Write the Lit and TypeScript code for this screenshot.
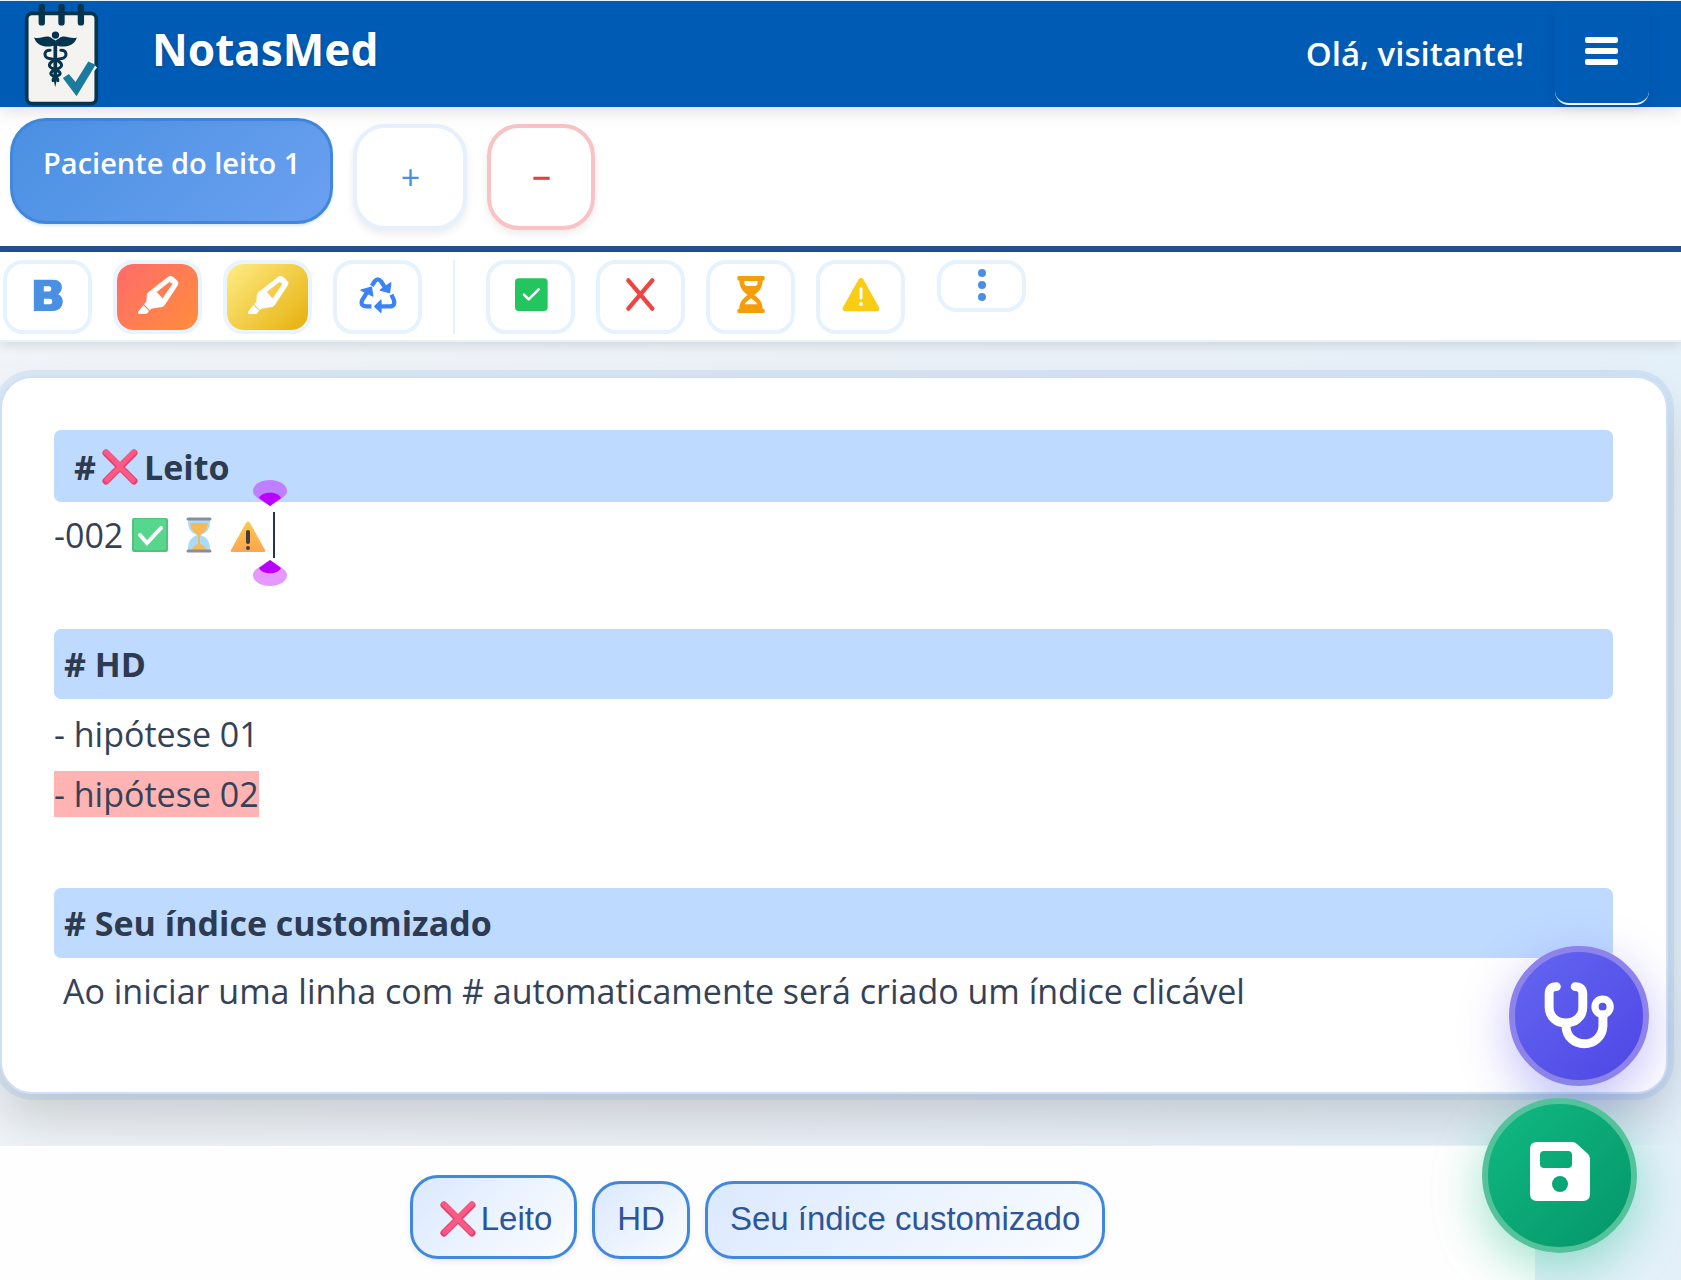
import { LitElement, html, svg, css } from "lit";
import { customElement, state } from "lit/decorators.js";

const logo = svg`
<svg class="logo" viewBox="72 8 224 308" role="img" aria-label="NotasMed">
  <rect x="80" y="39" width="208" height="270" rx="16" fill="#f5f3ef" stroke="#05344f" stroke-width="11"/>
  <g stroke="#05344f" stroke-width="19" stroke-linecap="round">
    <path d="M125 20V66M184 20V66M242 20V66"/>
  </g>
  <g fill="#05344f">
    <circle cx="166" cy="104" r="11"/>
    <path d="M102 111C122 118 140 100 156 114L166 120L176 114C192 100 210 118 230 111C224 130 208 140 180 138L171 136V234L165 260L160 234V136L151 138C124 140 108 130 102 111Z"/>
  </g>
  <g fill="none" stroke="#05344f" stroke-width="9" stroke-linecap="round">
    <path d="M150 149C130 148 130 172 147 174C166 176 186 184 184 196C182 208 152 206 152 219C152 228 176 228 173 240"/>
    <path d="M182 149C202 148 202 172 185 174C166 176 146 184 148 196C150 208 180 206 180 219C180 228 156 226 159 240"/>
  </g>
  <path d="M203 215L229 246L278 190" fill="none" stroke="#f5f3ef" stroke-width="34"/>
  <path d="M188 232L206 220L226 244L264 183L286 193L229 287Z" fill="#1a7b9e"/>
</svg>`;

const bold = svg`
<svg class="icon" viewBox="88 145 110 110" aria-hidden="true">
  <path fill="#4a90e2" fill-rule="evenodd" d="M102 156H158C190 156 188 190 172 198C194 206 190 246 158 246H102ZM131 175V190H146C155 190 155 175 146 175ZM131 211V227H148C158 227 158 211 148 211Z"/>
</svg>`;

const marker = svg`
<svg class="icon pen" viewBox="406 130 126 126" aria-hidden="true">
  <path fill="#fff" stroke="#fff" stroke-width="2" fill-rule="evenodd" d="M500 139C506 135 511 138 516 141L526 150C531 155 530 160 526 166L489 222C485 228 480 229 474 229L450 233L444 237L428 221L435 213L437 192C438 187 441 184 446 181ZM503 153L464 184L479 200L483 204L514 159Z"/>
  <path fill="#fff" d="M425 224L442 240L438 247C435 250 432 250 427 250H413C407 249 408 245 411 241Z"/>
</svg>`;

const recycle = svg`
<svg class="icon" viewBox="1074 134 116 116" aria-hidden="true">
  <g fill="none" stroke="#3b82f6" stroke-width="13" stroke-linejoin="round">
    <path d="M1113 164L1122 150Q1131 138 1141 150L1155 172"/>
    <path d="M1173 191L1180 206Q1186 226 1168 227H1136"/>
    <path d="M1112 227H1096Q1078 226 1083 209L1100 181"/>
  </g>
  <g fill="#3b82f6" stroke="#3b82f6" stroke-width="4" stroke-linejoin="round">
    <path d="M1171 155L1167 185L1139 177Z"/>
    <path d="M1141 208V245L1122 227Z"/>
    <path d="M1080 177L1112 168L1116 195Z"/>
  </g>
</svg>`;

const check = svg`
<svg class="icon" viewBox="633 527 114 114" aria-hidden="true">
  <rect x="642" y="534" width="98" height="98" rx="11" fill="#22c55e"/>
  <path d="M669 583L683 597L713 567" fill="none" stroke="#fff" stroke-width="8" stroke-linecap="round" stroke-linejoin="round"/>
</svg>`;

const cross = svg`
<svg class="icon" viewBox="966 527 114 114" aria-hidden="true">
  <path d="M985 540L1057 625M1057 540L985 625" stroke="#ef4444" stroke-width="13" stroke-linecap="round"/>
</svg>`;

const hourglass = svg`
<svg class="icon" viewBox="0 1 114 114" aria-hidden="true">
  <path fill="#f59e0b" fill-rule="evenodd" d="M20 1H94Q98 1 98 6V10Q98 15 92 15C91 35 84 45 67 58C84 71 91 80 92 99Q98 99 98 104V108Q98 112 94 112H20Q16 112 16 108V104Q16 99 22 99C23 80 30 71 47 58C30 45 23 35 22 15Q16 15 16 10V6Q16 1 20 1ZM37 16V23Q38 31 44 31H70Q76 31 77 23V16ZM57 68L42 80L38 86H76L72 80Z"/>
</svg>`;

const warning = svg`
<svg class="icon" viewBox="0 2 114 114" aria-hidden="true">
  <path fill="#facc15" d="M50 12Q57 4 64 12L111 96Q115 106 105 108H9Q-1 106 3 96Z"/>
  <path d="M57 40V68" stroke="#fff" stroke-width="9" stroke-linecap="round"/>
  <circle cx="57" cy="86" r="6" fill="#fff"/>
</svg>`;

const dots = svg`
<svg class="dots" viewBox="0 0 10 32" aria-hidden="true" fill="#4a90e2">
  <circle cx="5" cy="4" r="4"/><circle cx="5" cy="16" r="4"/><circle cx="5" cy="28" r="4"/>
</svg>`;

const bars = svg`
<svg class="bars" viewBox="0 0 33 28" aria-hidden="true" fill="#fff">
  <rect y="0" width="33" height="6" rx="2"/><rect y="11" width="33" height="6" rx="2"/><rect y="22" width="33" height="6" rx="2"/>
</svg>`;

const stethoscope = svg`
<svg class="steth" viewBox="490 240 220 212" aria-hidden="true">
  <g fill="none" stroke="#fff" stroke-width="27" stroke-linecap="round">
    <path d="M530 260Q508 260 508 282V322C508 353 532 370 558 370C586 370 610 353 610 322V282Q610 260 587 260"/>
    <path d="M559 378C559 412 584 433 614 433C646 433 671 410 671 378V345"/>
  </g>
  <circle cx="670" cy="321" r="23" fill="none" stroke="#fff" stroke-width="22"/>
</svg>`;

const floppy = svg`
<svg class="floppy" viewBox="0 0 60 59" aria-hidden="true">
  <path fill="#fff" fill-rule="evenodd" d="M7 0H42Q45 0 47 2L58 12Q60 14 60 17V52Q60 59 53 59H7Q0 59 0 52V7Q0 0 7 0ZM14 9Q10 9 10 13V22Q10 26 14 26H38Q42 26 42 22V13Q42 9 38 9ZM30 34A8 8 0 1 0 30 50A8 8 0 1 0 30 34Z"/>
</svg>`;

const emojiCross = svg`
<svg class="emoji" viewBox="0 0 36 36" role="img" aria-label="❌">
  <path d="M4 4L32 32M32 4L4 32" stroke="#e0416f" stroke-width="7" stroke-linecap="round"/>
  <path d="M4 3L18 17L32 3M5 31L18 18L31 31" fill="none" stroke="#fc5a85" stroke-width="5" stroke-linecap="round"/>
</svg>`;

const emojiCheck = svg`
<svg class="emoji" viewBox="0 0 36 36" role="img" aria-label="✅">
  <rect y="1" width="36" height="34" rx="2" fill="#4fc47f"/>
  <rect x="2" y="2" width="32" height="31" rx="2" fill="#57d68d"/>
  <path d="M8 18L15 26L29 11" fill="none" stroke="#fff" stroke-width="4" stroke-linecap="round"/>
</svg>`;

const emojiGlass = svg`
<svg class="emoji" viewBox="0 0 36 36" role="img" aria-label="⏳">
  <path d="M7 3H29C29 12 27 15 20 18C27 21 29 25 29 33H7C7 25 9 21 16 18C9 15 7 12 7 3Z" fill="#a9dbfb"/>
  <path d="M9 6H27C26 12 24 15 19 18V27Q25 29 25 33H11Q11 29 17 27V18C12 15 10 12 9 6Z" fill="#f6b955"/>
  <path d="M7 2H29M7 34H29" stroke="#8b8d99" stroke-width="3" stroke-linecap="round"/>
</svg>`;

const emojiWarning = svg`
<svg class="emoji" viewBox="0 0 36 36" role="img" aria-label="⚠️">
  <defs><linearGradient id="amber" x2="0" y2="1"><stop stop-color="#ffc849"/><stop offset="1" stop-color="#ffa54f"/></linearGradient></defs>
  <path d="M16 6Q18 3 20 6L35 33Q36 35 34 35H2Q0 35 1 33Z" fill="url(#amber)"/>
  <path d="M18 15V25" stroke="#403c46" stroke-width="4" stroke-linecap="round"/>
  <circle cx="18" cy="31" r="2" fill="#403c46"/>
</svg>`;

const handle = (cls: string, tint: string) => svg`
<svg class="handle ${cls}" viewBox="0 0 34 26" aria-hidden="true">
  <path d="M17 0C27 0 34 5 34 11C34 16 29 18 17 26C5 18 0 16 0 11C0 5 7 0 17 0Z" fill="${tint}"/>
  <path d="M6 18C9 11 25 11 28 18L17 26Z" fill="#bc00ff"/>
</svg>`;

@customElement("app-root")
export class AppRoot extends LitElement {
  @state() private active = 0;
  @state() private patients = ["Paciente do leito 1"];

  static styles = css`
    :host {
      display: flex;
      flex-direction: column;
      min-height: 100vh;
      box-sizing: border-box;
      font-family: "Open Sans", "Noto Sans", sans-serif;
      color: #2d3a50;
      background: linear-gradient(100deg, #f1f5f9 0%, #ecf1f8 50%, #e3f0fa 100%);
    }
    * { box-sizing: border-box; }
    button { font: inherit; margin: 0; cursor: pointer; }
    svg { display: block; flex: none; }

    header {
      display: flex;
      align-items: center;
      height: 107px;
      padding: 0 32px 0 24px;
      border-top: 1px solid #e6f3fb;
      background: #005bb5;
      color: #fff;
      box-shadow: 0 2px 18px rgba(0, 0, 0, 0.16);
      position: relative;
      z-index: 1;
    }
    .logo { width: 75px; height: 103px; }
    h1 {
      margin: 0 auto 10px 53px;
      font-family: "Noto Sans", sans-serif;
      font-size: 44px;
      line-height: 64px;
      font-weight: 700;
      text-shadow: 0 1px 3px rgba(0, 0, 0, 0.25);
    }
    .hello { font-size: 33px; line-height: 48px; font-weight: 600; }
    .menu {
      align-self: stretch;
      width: 94px;
      margin: 0 0 2px 31px;
      padding: 0 2px 2px 0;
      display: grid;
      place-items: center;
      border: 0;
      border-bottom: 2px solid #f2f8ff;
      border-radius: 14px;
      background: none;
      box-shadow: 0 4px 12px rgba(0, 0, 0, 0.08);
    }
    .bars { width: 33px; height: 28px; }

    .tabs {
      display: flex;
      align-items: flex-end;
      gap: 20px;
      padding: 11px 10px 16px;
      background: #fff;
      border-bottom: 6px solid #235095;
    }
    .tab {
      height: 106px;
      margin-bottom: 6px;
      padding: 0 30px 16px;
      border: 3px solid #4187dc;
      border-radius: 36px;
      background: linear-gradient(135deg, #4a90e2, #6ba0f0);
      color: #fff;
      font-size: 29px;
      line-height: 40px;
      font-weight: 600;
      box-shadow: 0 2px 3px rgba(74, 144, 226, 0.2);
    }
    .round {
      width: 114px;
      height: 106px;
      padding: 0;
      border: 4px solid #e5f1fc;
      border-radius: 32px;
      background: #fff;
      color: #4a90e2;
      font-size: 34px;
      line-height: 40px;
      box-shadow: 0 4px 8px rgba(0, 0, 0, 0.08);
    }
    .round.remove { width: 108px; border-color: #f9c3c5; color: #e53e3e; font-weight: 600; }

    .tools {
      display: flex;
      align-items: flex-start;
      gap: 21px;
      padding: 8px 3px 6px;
      background: #fff;
      border-bottom: 2px solid #e6f1fa;
      box-shadow: 0 3px 12px rgba(0, 0, 0, 0.12);
      position: relative;
    }
    .tool {
      display: grid;
      place-items: center;
      width: 89px;
      height: 74px;
      padding: 0 0 4px;
      border: 4px solid #e6f2fd;
      border-radius: 20px;
      background: #fff;
    }
    .tool.red { background: linear-gradient(135deg, #ff6b6b, #ff8e3c) padding-box; border-color: #eaf4fc; }
    .tool.yellow { background: linear-gradient(135deg, #ffec85, #e6b00c) padding-box; border-color: #eaf4fc; }
    .tool.more { height: 52px; margin-left: 11px; padding: 0 0 2px; }
    .icon { width: 38px; height: 38px; }
    .icon.pen { width: 42px; height: 42px; }
    .dots { width: 10px; height: 32px; }
    .rule { width: 2px; height: 74px; margin: 0 10px; background: #e6f1fa; }

    main { flex: 1; display: flex; padding: 34px 13px 51px 0; overflow: hidden; }
    .editor {
      flex: 1;
      padding: 52px 53px 0 52px;
      border: 2px solid #cfe0f6;
      border-radius: 32px;
      background: #fff;
      box-shadow: 0 0 0 6px rgba(74, 144, 226, 0.13), 0 26px 50px rgba(0, 0, 0, 0.16);
      font-size: 34px;
      line-height: 60px;
    }
    h2 {
      display: flex;
      align-items: center;
      margin: 0;
      padding: 0 10px;
      height: 70px;
      border-radius: 7px;
      background: #bedaff;
      font-size: 34px;
      line-height: 48px;
      font-weight: 700;
    }
    h2.flag { height: 72px; padding: 2px 20px 0; }
    h2.flag .emoji { margin: 0 6px; }
    p { margin: 0; color: #344258; }
    .status { display: flex; align-items: center; height: 62px; margin-bottom: 65px; padding-top: 4px; }
    .emoji { width: 36px; height: 36px; }
    .status .emoji { margin-left: 13px; }
    .status .emoji:first-of-type { margin-left: 9px; }
    .caret { position: relative; width: 2px; height: 46px; margin-left: 7px; background: #24344c; }
    .handle { position: absolute; left: -20px; width: 34px; height: 26px; }
    .handle.top { bottom: 52px; }
    .handle.bottom { top: 48px; transform: scaleY(-1); }
    .first { padding-top: 5px; }
    .second { margin-bottom: 64px; }
    mark { background: #ffb3b3; color: inherit; }
    .hint { padding-left: 9px; padding-top: 3px; }

    footer {
      display: flex;
      align-items: flex-end;
      justify-content: center;
      gap: 15px;
      min-height: 135px;
      margin-right: 146px;
      padding: 0 20px 21px 0;
      background: #fefefe;
      border-top: 1px solid #e8f1fa;
      position: relative;
    }
    .chip {
      display: flex;
      align-items: center;
      height: 78px;
      padding: 0 22px 2px;
      border: 3px solid #4187dc;
      border-radius: 28px;
      background: linear-gradient(135deg, #dbe9fe, #fbfdff);
      color: #2c5699;
      font-family: "Liberation Sans", Arial, sans-serif;
      font-size: 33px;
      line-height: 40px;
      text-decoration: none;
      box-shadow: 0 3px 6px rgba(0, 0, 0, 0.08);
    }
    .chip.flag { height: 84px; padding-top: 6px; }
    .chip .emoji { margin: 0 5px; }

    .fab {
      position: fixed;
      display: grid;
      place-items: center;
      padding: 0;
      border-radius: 50%;
      z-index: 2;
    }
    .exam {
      right: 32px;
      bottom: 194px;
      width: 140px;
      height: 140px;
      border: 6px solid #8d83ea;
      background: linear-gradient(135deg, #6366f1, #4f46e5);
      box-shadow: 0 16px 50px rgba(99, 85, 241, 0.38);
    }
    .save {
      right: 44px;
      bottom: 27px;
      width: 155px;
      height: 155px;
      border: 6px solid #54c29b;
      background: linear-gradient(135deg, #10b981, #059669);
      box-shadow: 0 16px 50px rgba(16, 185, 129, 0.4);
    }
    .steth { width: 73px; height: 70px; margin-bottom: 2px; }
    .floppy { width: 60px; height: 59px; margin-bottom: 8px; }
  `;

  private add() {
    this.patients = [...this.patients, `Paciente do leito ${this.patients.length + 1}`];
  }

  private remove() {
    if (this.patients.length > 1) this.patients = this.patients.slice(0, -1);
  }

  render() {
    return html`
      <header>
        ${logo}
        <h1>NotasMed</h1>
        <span class="hello">Olá, visitante!</span>
        <button class="menu" aria-label="Menu">${bars}</button>
      </header>
      <nav class="tabs" aria-label="Pacientes">
        ${this.patients.map((name, i) => html`
          <button class="tab" aria-pressed=${this.active === i} @click=${() => (this.active = i)}>${name}</button>`)}
        <button class="round" aria-label="Adicionar paciente" @click=${this.add}>+</button>
        <button class="round remove" aria-label="Remover paciente" @click=${this.remove}>−</button>
      </nav>
      <div class="tools" role="toolbar" aria-label="Formatação">
        <button class="tool" aria-label="Negrito">${bold}</button>
        <button class="tool red" aria-label="Marcador vermelho">${marker}</button>
        <button class="tool yellow" aria-label="Marcador amarelo">${marker}</button>
        <button class="tool" aria-label="Limpar">${recycle}</button>
        <span class="rule"></span>
        <button class="tool" aria-label="Feito">${check}</button>
        <button class="tool" aria-label="Cancelado">${cross}</button>
        <button class="tool" aria-label="Pendente">${hourglass}</button>
        <button class="tool" aria-label="Atenção">${warning}</button>
        <button class="tool more" aria-label="Mais opções">${dots}</button>
      </div>
      <main>
        <article class="editor">
          <h2 class="flag" id="leito">#${emojiCross}Leito</h2>
          <p class="status">
            <span>-002</span>${emojiCheck}${emojiGlass}${emojiWarning}
            <span class="caret">${handle("top", "#bf80ff")}${handle("bottom", "#e599ff")}</span>
          </p>
          <h2 id="hd"># HD</h2>
          <p class="first">- hipótese 01</p>
          <p class="second"><mark>- hipótese 02</mark></p>
          <h2 id="indice"># Seu índice customizado</h2>
          <p class="hint">Ao iniciar uma linha com # automaticamente será criado um índice clicável</p>
        </article>
      </main>
      <footer>
        <a class="chip flag" href="#leito">${emojiCross}Leito</a>
        <a class="chip" href="#hd">HD</a>
        <a class="chip" href="#indice">Seu índice customizado</a>
      </footer>
      <button class="fab exam" aria-label="Exame">${stethoscope}</button>
      <button class="fab save" aria-label="Salvar">${floppy}</button>
    `;
  }
}
